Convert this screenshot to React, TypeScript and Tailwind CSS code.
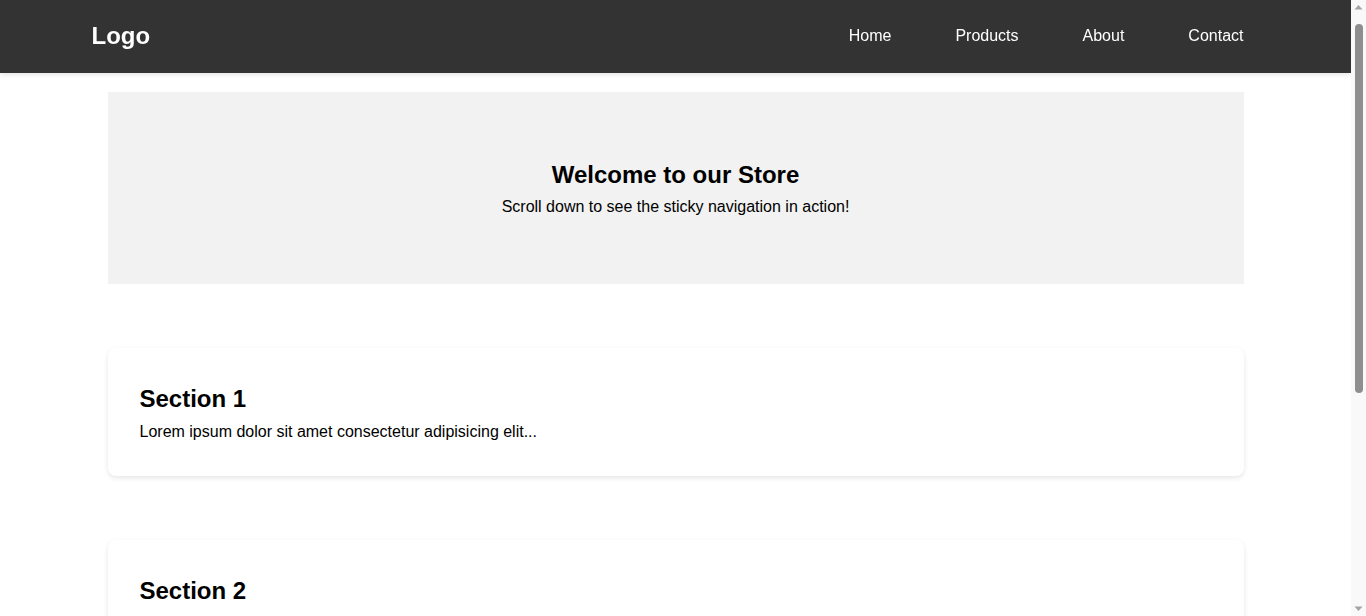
import React from "react";

const sections = [1, 2, 3, 4, 5, 6];

function Scrollbar() {
  return (
    <div className="flex h-full w-[15px] shrink-0 flex-col items-center bg-[#f9f9f9]">
      <svg width="15" height="14" viewBox="0 0 15 14" className="shrink-0">
        <polygon points="3.5,9.5 11.5,9.5 7.5,5" fill="#a3a3a3" />
      </svg>
      <div className="mt-[10px] h-[369px] w-[8px] rounded-[4px] bg-[#8e8e8e]" />
      <div className="flex-1" />
      <svg width="15" height="14" viewBox="0 0 15 14" className="shrink-0">
        <polygon points="3.5,4.5 11.5,4.5 7.5,9" fill="#a3a3a3" />
      </svg>
    </div>
  );
}

export default function App() {
  return (
    <div
      className="flex h-[616px] overflow-hidden bg-white text-black"
      style={{ fontFamily: '"Liberation Sans", Arial, sans-serif' }}
    >
      <div className="min-w-0 flex-1 overflow-hidden">
        <header className="sticky top-0 z-10 bg-[#333333] shadow-[0_2px_5px_rgba(0,0,0,0.1)]">
          <div className="mx-auto flex h-[73px] max-w-[1200px] items-center justify-between px-4 pb-[2px]">
            <h1 className="text-[24px] font-bold leading-[28px] text-white">Logo</h1>
            <nav className="flex gap-8">
              {["Home", "Products", "About", "Contact"].map((l) => (
                <a key={l} href="#" className="px-4 text-[16px] leading-[18px] text-white">
                  {l}
                </a>
              ))}
            </nav>
          </div>
        </header>
        <main className="mx-auto max-w-[1200px] px-8 pt-[19px] pb-16">
          <section className="flex h-[192px] flex-col items-center justify-center bg-[#f2f2f2] text-center">
            <h2 className="text-[24px] font-bold leading-[28px]">Welcome to our Store</h2>
            <p className="mt-[9px] text-[16px] leading-[18px]">
              Scroll down to see the sticky navigation in action!
            </p>
          </section>
          <div className="mt-16 flex flex-col gap-16">
            {sections.map((n) => (
              <section
                key={n}
                className="rounded-lg bg-white px-8 pt-[37px] pb-[35px] shadow-[0_2px_5px_rgba(0,0,0,0.1)]"
              >
                <h2 className="text-[24px] font-bold leading-[28px]">Section {n}</h2>
                <p className="mt-[10px] text-[16px] leading-[18px]">
                  Lorem ipsum dolor sit amet consectetur adipisicing elit...
                </p>
              </section>
            ))}
          </div>
        </main>
      </div>
      <Scrollbar />
    </div>
  );
}
